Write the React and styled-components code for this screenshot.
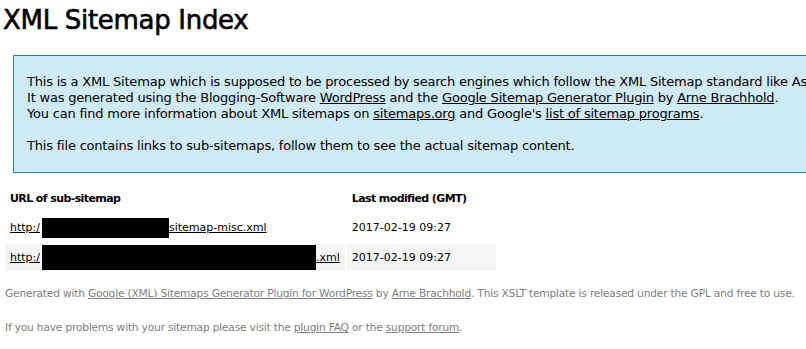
import React from "react";
import styled, { createGlobalStyle } from "styled-components";

const GlobalStyle = createGlobalStyle`
  html, body {
    margin: 0;
    padding: 0;
    background: #fff;
    overflow: hidden;
  }
  body {
    font-family: "DejaVu Sans", Verdana, sans-serif;
    font-size: 13px;
    color: #000;
  }
  a {
    color: #000;
  }
`;

const rows = [
  { before: "http:/", hidden: 127, hiddenHeight: 20, after: "sitemap-misc.xml", date: "2017-02-19 09:27" },
  { before: "http:/", hidden: 274, hiddenHeight: 25, after: ".xml", date: "2017-02-19 09:27", high: true },
];

const App = () => {
  return (
    <Page>
      <GlobalStyle />
      <Title>XML Sitemap Index</Title>
      <Intro>
        <IntroText>
          <Line>This is a XML Sitemap which is supposed to be processed by search engines which follow the XML Sitemap standard like Ask.com, Bing, Google and Yahoo.</Line>
          <Line>
            It was generated using the Blogging-Software <a href="#">WordPress</a> and the{" "}
            <a href="#">Google Sitemap Generator Plugin</a> by <a href="#">Arne Brachhold</a>.
          </Line>
          <Line>
            You can find more information about XML sitemaps on <a href="#">sitemaps.org</a> and
            Google's <a href="#">list of sitemap programs</a>.
          </Line>
        </IntroText>
        <IntroText>
          <Line>This file contains links to sub-sitemaps, follow them to see the actual sitemap content.</Line>
        </IntroText>
      </Intro>
      <Table>
        <thead>
          <tr>
            <Th>URL of sub-sitemap</Th>
            <Th>Last modified (GMT)</Th>
          </tr>
        </thead>
        <tbody>
          {rows.map((row, i) => (
            <Row key={i} $high={row.high}>
              <Td>
                <a href="#">
                  {row.before}
                  <Redacted $w={row.hidden} $h={row.hiddenHeight} />
                  {row.after}
                </a>
              </Td>
              <Td>{row.date}</Td>
            </Row>
          ))}
        </tbody>
      </Table>
      <Footer>
        <FooterLine>
          Generated with <a href="#">Google (XML) Sitemaps Generator Plugin for WordPress</a> by{" "}
          <a href="#">Arne Brachhold</a>. This XSLT template is released under the GPL and free to use.
        </FooterLine>
        <FooterLine>
          If you have problems with your sitemap please visit the <a href="#">plugin FAQ</a> or the{" "}
          <a href="#">support forum</a>.
        </FooterLine>
      </Footer>
    </Page>
  );
};

const Page = styled.div`
  width: 1200px;
  padding: 5px 3px 0;
`;

const Title = styled.h1`
  margin: 0;
  font-size: 26px;
  line-height: 30px;
  font-weight: normal;
  letter-spacing: -0.3px;
  -webkit-text-stroke: 0.6px #000;
`;

const Intro = styled.div`
  display: flex;
  flex-direction: column;
  gap: 16px;
  margin: 20px 10px 10px;
  padding: 18px 13px;
  background-color: #cfebf7;
  border: 1px solid #2580b2;
`;

const IntroText = styled.p`
  margin: 0;
  line-height: 16px;
  letter-spacing: -0.2px;
`;

const Line = styled.span`
  display: block;
  white-space: nowrap;
`;

const Table = styled.table`
  border-spacing: 2px;
  font-size: 11px;
`;

const Th = styled.th`
  padding: 5px 30px 5px 5px;
  text-align: left;
  line-height: 17px;
  letter-spacing: -0.6px;
  white-space: nowrap;
`;

const Row = styled.tr`
  background-color: ${(p) => (p.$high ? "#f5f5f5" : "transparent")};
`;

const Td = styled.td`
  padding: 5px;
  line-height: 17px;
  white-space: nowrap;
`;

const Redacted = styled.span`
  display: inline-block;
  width: ${(p) => p.$w}px;
  height: ${(p) => p.$h}px;
  margin: ${(p) => -(p.$h - 17) / 2}px 0 ${(p) => -(p.$h - 17) / 2}px 2px;
  vertical-align: middle;
  background: #000;
`;

const Footer = styled.div`
  display: flex;
  flex-direction: column;
  gap: 18px;
  margin-top: 10px;
  padding: 2px;
  font-size: 8pt;
  letter-spacing: -0.2px;
  color: gray;

  a {
    color: gray;
  }
`;

const FooterLine = styled.p`
  margin: 2px 0 0;
  line-height: 14px;
  white-space: nowrap;
`;

export default App;
